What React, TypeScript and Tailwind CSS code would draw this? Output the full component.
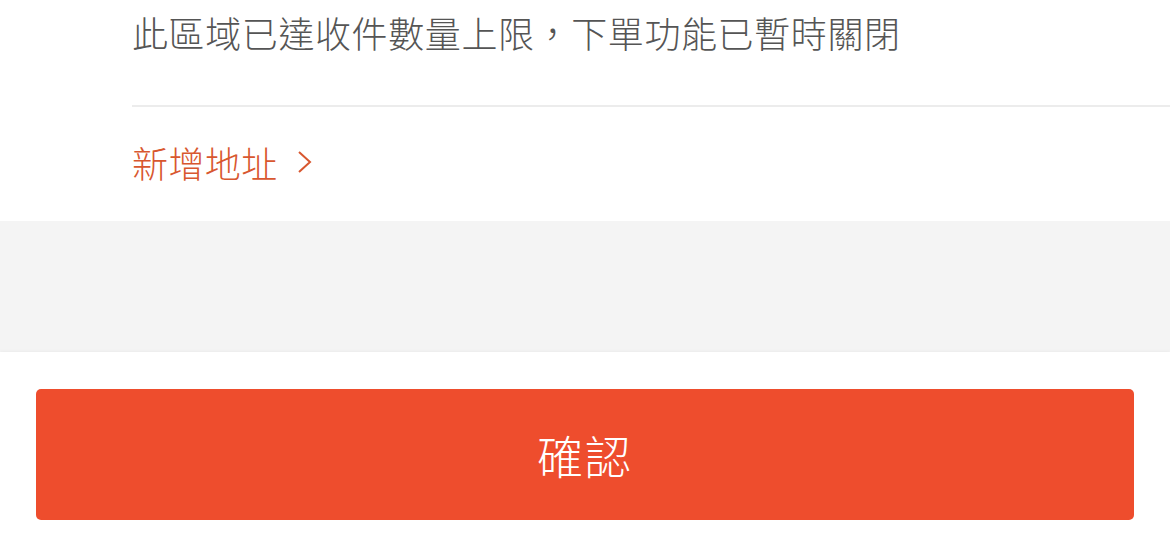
const font = "font-['Noto_Sans_CJK_TC','Noto_Sans_CJK_SC',sans-serif]";

export default function App() {
  return (
    <div className={`flex h-[534px] w-[1170px] flex-col overflow-hidden bg-[#f4f4f4] font-light ${font}`}>
      <section className="bg-white pl-[132px]">
        <p className="pt-[8px] text-[36px] leading-[48px] tracking-[0.6px] text-[#555555]">
          此區域已達收件數量上限，下單功能已暫時關閉
        </p>
        <div className="mt-[49px] h-[2px] bg-[#ececec]" />
        <button className="flex items-center gap-[19px] pt-[31px] pb-[35px] text-[36px] leading-[48px] text-[#d8572f]">
          <span className="tracking-[0.4px]">新增地址</span>
          <svg width="16" height="24" viewBox="0 0 16 24" fill="none" stroke="currentColor" strokeWidth="2">
            <path d="M2 2l11 10L2 22" />
          </svg>
        </button>
      </section>
      <div className="h-[131px]" />
      <footer className="flex-1 bg-white px-[36px] pt-[37px] shadow-[0_-1px_3px_rgba(0,0,0,0.04)]">
        <button className="flex h-[131px] w-full items-center justify-center rounded-[5px] bg-[#ee4d2d] text-[46px] tracking-[2px] text-white">
          確認
        </button>
      </footer>
    </div>
  );
}
